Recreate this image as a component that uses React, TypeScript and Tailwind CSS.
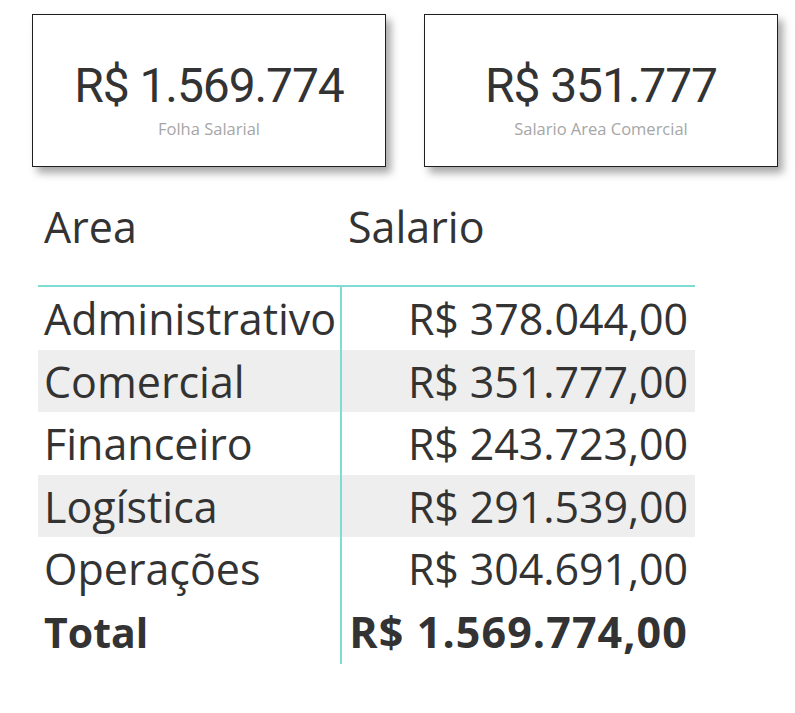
import React from "react";

const rows = [
  { area: "Administrativo", value: "R$ 378.044,00" },
  { area: "Comercial", value: "R$ 351.777,00" },
  { area: "Financeiro", value: "R$ 243.723,00" },
  { area: "Logística", value: "R$ 291.539,00" },
  { area: "Operações", value: "R$ 304.691,00" },
];

function Card({ value, label }: { value: string; label: string }) {
  return (
    <div className="w-[354px] h-[153px] border border-[#1f1f1f] bg-white shadow-[5px_6px_8px_rgba(0,0,0,0.35)] flex flex-col items-center">
      <div
        className="mt-[42px] text-[48px] leading-[58px] text-[#333333] tracking-[-1.1px]"
        style={{ fontFamily: "Roboto, 'Liberation Sans', sans-serif" }}
      >
        {value}
      </div>
      <div
        className="mt-[4px] text-[16.5px] leading-[20px] text-[#a6a6a6]"
        style={{ fontFamily: "'Open Sans', 'Noto Sans', sans-serif" }}
      >
        {label}
      </div>
    </div>
  );
}

export default function App() {
  return (
    <div
      className="w-[795px] h-[713px] bg-white overflow-hidden"
      style={{ fontFamily: "'Open Sans', 'Noto Sans', sans-serif" }}
    >
      <div className="flex gap-[38px] pl-[32px] pt-[14px]">
        <Card value="R$ 1.569.774" label="Folha Salarial" />
        <Card value="R$ 351.777" label="Salario Area Comercial" />
      </div>

      <div className="ml-[38px] mt-[23px] w-[657px] text-[#333333]">
        <div className="grid grid-cols-[302px_355px] h-[97px] border-b-2 border-[#7fdcd3] text-[43px] leading-[56px]">
          <div className="pl-[6px] pt-[9px]">Area</div>
          <div className="pl-[8px] pt-[9px]">Salario</div>
        </div>
        {rows.map((r, i) => (
          <div
            key={r.area}
            className={`grid grid-cols-[302px_355px] h-[62.5px] ${i % 2 === 1 ? "bg-[#eeeeee]" : "bg-white"}`}
          >
            <div className="pl-[6px] text-[43px] leading-[64px] whitespace-nowrap">{r.area}</div>
            <div className="border-l-2 border-[#7fdcd3] pr-[7px] text-right text-[43px] leading-[64px] tracking-[-0.1px] whitespace-nowrap">
              {r.value}
            </div>
          </div>
        ))}
        <div className="grid grid-cols-[302px_355px] h-[62.5px] font-bold">
          <div className="pl-[6px] text-[41px] leading-[64px]">Total</div>
          <div className="border-l-2 border-[#7fdcd3] pr-[7px] text-right text-[43px] leading-[64px] tracking-[1.1px] whitespace-nowrap">
            R$ 1.569.774,00
          </div>
        </div>
      </div>
    </div>
  );
}
